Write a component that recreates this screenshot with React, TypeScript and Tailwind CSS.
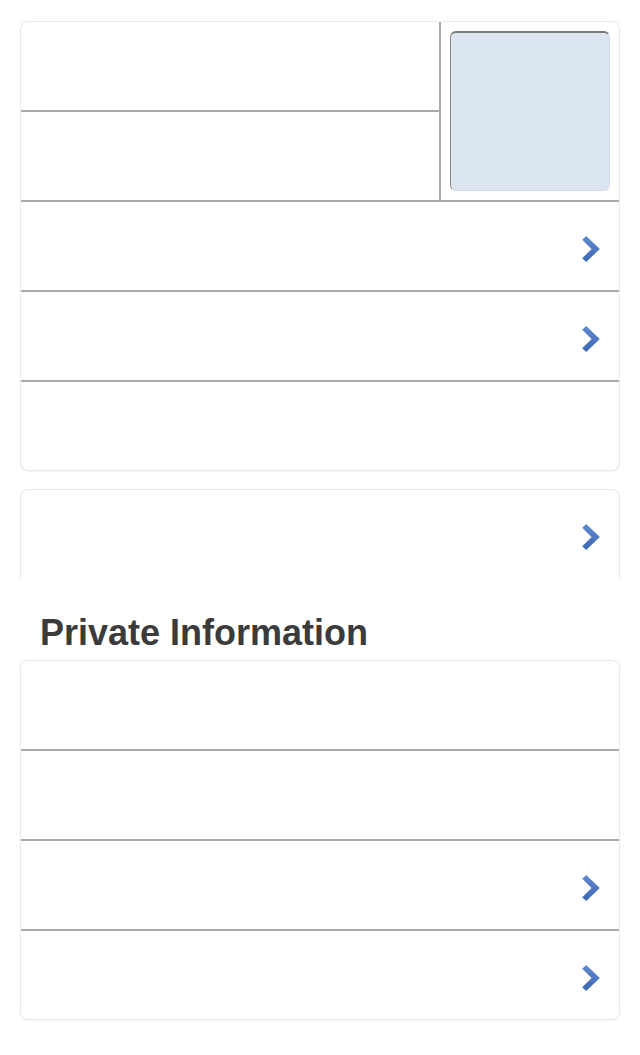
const Chevron = () => (
  <svg width="18" height="26" viewBox="0 0 18 26" className="mt-[6px] shrink-0">
    <defs>
      <linearGradient id="chev" x1="0" y1="0" x2="0" y2="1">
        <stop offset="0" stopColor="#6189cf" />
        <stop offset="1" stopColor="#3c67b3" />
      </linearGradient>
    </defs>
    <path d="M4.2 0 L17.8 13 L4.2 26 L0.2 22.2 L9.6 13 L0.2 3.8 Z" fill="url(#chev)" />
  </svg>
);

const Line = () => <div className="h-[2px] bg-[#a9a9a9]" />;

const Row = ({ arrow = false }: { arrow?: boolean }) => (
  <div className="h-[88px] flex items-center justify-end pr-[19px]">
    {arrow && <Chevron />}
  </div>
);

const App = () => {
  return (
    <div
      className="min-h-screen bg-white px-5 pt-[21px]"
      style={{ fontFamily: '"Liberation Sans", Arial, sans-serif' }}
    >
      <div className="bg-white border border-[#e9e9e9] rounded-lg shadow-[0_1px_2px_rgba(0,0,0,0.05)] overflow-hidden">
        <div className="flex">
          <div className="flex-1 flex flex-col">
            <Row />
            <Line />
            <Row />
          </div>
          <div className="w-[2px] bg-[#a9a9a9]" />
          <div className="w-[178px] flex items-center pl-[9px]">
            <div className="w-[160px] h-[160px] rounded-md bg-[#dce6f1] border border-[#d3dde9] border-t-[#7a7a7a] border-l-[#8c8c8c] border-t-2" />
          </div>
        </div>
        <Line />
        <Row arrow />
        <Line />
        <Row arrow />
        <Line />
        <Row />
      </div>

      <div className="mt-[18px] h-[89px] bg-white border border-b-0 border-[#e9e9e9] rounded-t-lg overflow-hidden">
        <Row arrow />
      </div>

      <h2 className="mt-[37px] mb-[9px] ml-[20px] text-[36px] leading-9 font-bold text-[#3b3b3b]">
        Private Information
      </h2>

      <div className="bg-white border border-[#e9e9e9] rounded-lg shadow-[0_1px_2px_rgba(0,0,0,0.05)] overflow-hidden">
        <Row />
        <Line />
        <Row />
        <Line />
        <Row arrow />
        <Line />
        <Row arrow />
      </div>
    </div>
  );
};

export default App;
